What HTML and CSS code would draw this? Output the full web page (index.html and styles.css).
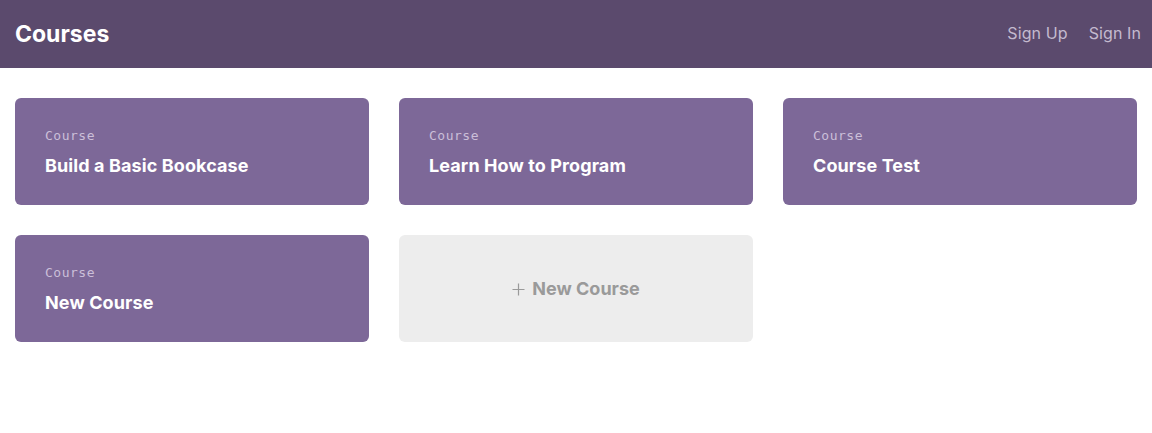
FILE: index.html
```html
<!DOCTYPE html>
<html>
<head>
<meta charset="utf-8">
<link rel="stylesheet" href="styles.css">
</head>
<body>
<header class="topbar">
  <h1 class="brand">Courses</h1>
  <nav class="nav">
    <a class="nav-link" href="#">Sign Up</a>
    <a class="nav-link" href="#">Sign In</a>
  </nav>
</header>
<main class="grid">
  <a class="card" href="#"><span class="card-label">Course</span><span class="card-title">Build a Basic Bookcase</span></a>
  <a class="card" href="#"><span class="card-label">Course</span><span class="card-title">Learn How to Program</span></a>
  <a class="card" href="#"><span class="card-label">Course</span><span class="card-title">Course Test</span></a>
  <a class="card" href="#"><span class="card-label">Course</span><span class="card-title">New Course</span></a>
  <a class="card card-new" href="#"><span class="new-title"><svg class="plus" width="13" height="13" viewBox="0 0 13 13"><path d="M6.5 0.5V12.5M0.5 6.5H12.5" stroke="#9a9a9a" stroke-width="1.2" fill="none"/></svg>New Course</span></a>
</main>
</body>
</html>
```
FILE: styles.css
```css
* { box-sizing: border-box; }
body {
  margin: 0;
  font-family: Inter, "Liberation Sans", sans-serif;
  background: #fff;
}
.topbar {
  height: 68px;
  background: #5b4a6d;
  display: flex;
  align-items: center;
  justify-content: space-between;
  padding: 0 11px 0 15px;
}
.brand {
  margin: 0;
  color: #fff;
  font-size: 23px;
  font-weight: 700;
  letter-spacing: 0;
}
.nav {
  display: flex;
  gap: 21px;
  align-self: flex-start;
  padding-top: 23px;
}
.nav-link {
  color: #c4bacf;
  text-decoration: none;
  font-size: 16px;
  letter-spacing: 0.1px;
}
.grid {
  display: grid;
  grid-template-columns: repeat(3, 1fr);
  gap: 30px;
  padding: 30px 15px;
}
.card {
  height: 107px;
  background: #7d6898;
  border-radius: 6px;
  padding: 30px 30px;
  display: flex;
  flex-direction: column;
  text-decoration: none;
}
.card-label {
  font-family: "DejaVu Sans Mono", "Liberation Mono", monospace;
  font-size: 13px;
  letter-spacing: 0.5px;
  color: #cbbfd9;
  line-height: 16px;
}
.card-title {
  margin-top: 11px;
  color: #fff;
  font-size: 18px;
  font-weight: 700;
  line-height: 22px;
  letter-spacing: 0.1px;
}
.card-new {
  background: #ededed;
  align-items: center;
  justify-content: center;
  padding: 0;
}
.new-title {
  display: flex;
  align-items: center;
  gap: 7px;
  color: #9a9a9a;
  font-size: 18px;
  font-weight: 700;
}
.plus {
  display: block;
  margin-top: 1px;
}
```
